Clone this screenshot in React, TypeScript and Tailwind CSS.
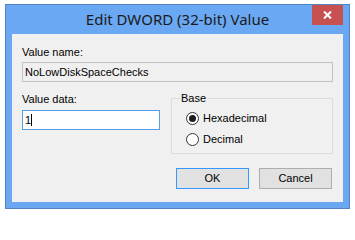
export default function App() {
  return (
    <div className="w-[355px] h-[213px] bg-white pt-[4px] pl-[5px] font-['Liberation_Sans',Arial,sans-serif] text-[11px] text-black">
      <div className="w-[345px] h-[205px] border border-[#5484c4] bg-[#6ba8f3] flex flex-col px-[6px] pb-[6px]">
        {/* title bar */}
        <div className="relative h-[29px] flex justify-center pt-[4px]">
          <span className="font-['Noto_Sans',sans-serif] text-[15px] leading-[20px] text-[#1a1a1a]">
            Edit DWORD (32-bit) Value
          </span>
          <button className="absolute right-0 top-0 w-[31px] h-[20px] bg-[#c75050] flex items-center justify-center">
            <svg width="9" height="8" viewBox="0 0 9 8">
              <path d="M1 0.5 L8 7.5 M8 0.5 L1 7.5" stroke="white" strokeWidth="2" />
            </svg>
          </button>
        </div>

        <div className="flex-1 bg-[#f0f0f0] px-[10px] pt-[12px]">
          <div className="leading-[13px]">Value name:</div>
          <div className="mt-[3px] w-[311px] h-[20px] border border-[#c2c2c2] bg-[#f0f0f0] pl-[2px] leading-[18px]">
            NoLowDiskSpaceChecks
          </div>

          <div className="flex mt-[10px]">
            <div className="w-[138px] pt-[1px]">
              <div className="leading-[13px]">Value data:</div>
              <div className="mt-[4px] h-[20px] border border-[#569de5] bg-white pl-[2px] leading-[18px] flex items-center">
                <span>1</span>
                <span className="inline-block w-[1px] h-[12px] bg-black" />
              </div>
            </div>

            <div className="ml-[11px] w-[162px]">
              <fieldset className="h-[62px] border border-[#dcdcdc]">
                <legend className="ml-[8px] px-[1px] leading-[13px]">Base</legend>
                <div className="flex flex-col pt-[7px] pl-[14px] gap-[8px]">
                  <label className="flex items-center gap-[4px] h-[13px]">
                    <span className="w-[13px] h-[13px] rounded-full border border-[#333] bg-white flex items-center justify-center">
                      <span className="w-[7px] h-[7px] rounded-full bg-[#1c1c1c]" />
                    </span>
                    <span className="leading-[13px]">Hexadecimal</span>
                  </label>
                  <label className="flex items-center gap-[4px] h-[13px]">
                    <span className="w-[13px] h-[13px] rounded-full border border-[#333] bg-white" />
                    <span className="leading-[13px]">Decimal</span>
                  </label>
                </div>
              </fieldset>

              <div className="flex mt-[14px] pl-[5px] gap-[10px]">
                <button className="w-[73px] h-[21px] border border-[#3399ff] bg-[#e1e1e1] leading-[19px]">OK</button>
                <button className="w-[73px] h-[21px] border border-[#adadad] bg-[#e1e1e1] leading-[19px]">Cancel</button>
              </div>
            </div>
          </div>
        </div>
      </div>
    </div>
  );
}
